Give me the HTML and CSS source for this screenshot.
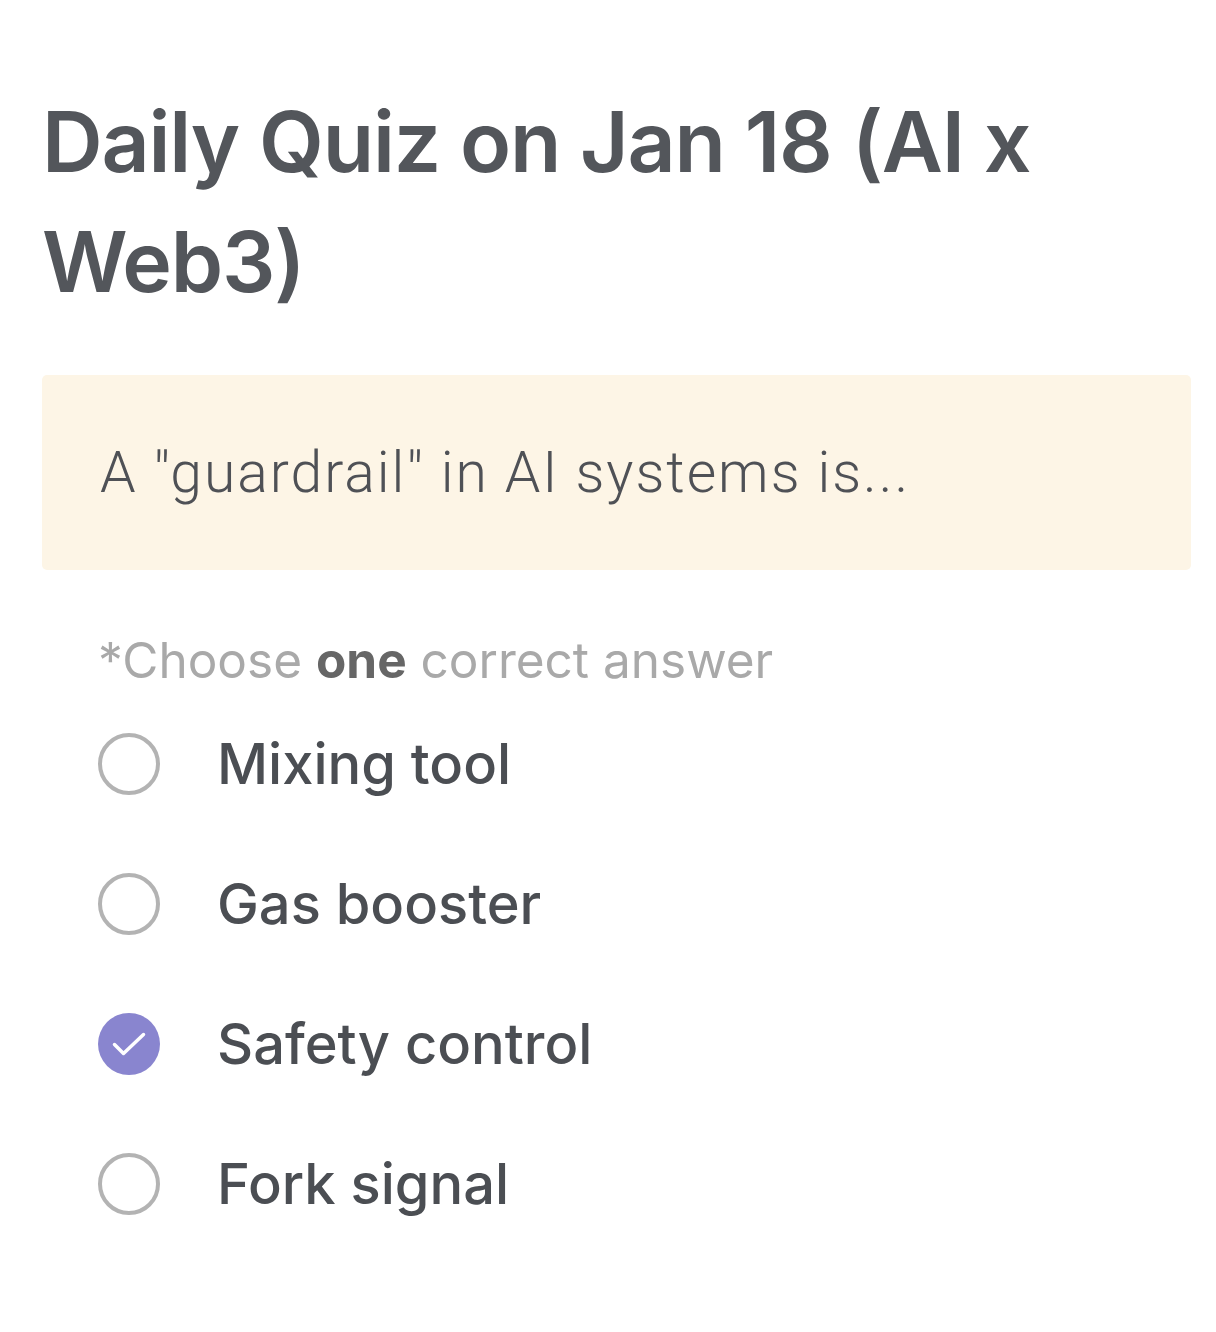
FILE: index.html
```html
<!DOCTYPE html>
<html>
<head>
<meta charset="utf-8">
<link rel="stylesheet" href="styles.css">
</head>
<body>
<main class="quiz">
  <h1 class="title">Daily Quiz on Jan 18 (AI x Web3)</h1>
  <div class="question">A "guardrail" in AI systems is...</div>
  <p class="hint">*Choose <b>one</b> correct answer</p>
  <ul class="options">
    <li class="option"><span class="radio"></span><span class="label">Mixing tool</span></li>
    <li class="option"><span class="radio"></span><span class="label">Gas booster</span></li>
    <li class="option"><span class="radio checked"><svg viewBox="0 0 62 62" width="62" height="62"><path d="M16.5 31.5 L25.5 40.5 L45.5 21.5" fill="none" stroke="#fff" stroke-width="3.5" stroke-linecap="round" stroke-linejoin="round"/></svg></span><span class="label">Safety control</span></li>
    <li class="option"><span class="radio"></span><span class="label">Fork signal</span></li>
  </ul>
</main>
</body>
</html>
```

FILE: styles.css
```css
html, body {
  margin: 0;
  padding: 0;
  background: #ffffff;
}
.quiz {
  padding: 82px 25px 0 42px;
  font-family: "Inter", "Liberation Sans", sans-serif;
}
.title {
  margin: 0;
  font-size: 84px;
  font-weight: 600;
  line-height: 120px;
  letter-spacing: -1.2px;
  color: #53565b;
  padding-right: 120px;
}
.question {
  margin-top: 53px;
  background: #fdf5e6;
  border-radius: 5px;
  height: 195px;
  box-sizing: border-box;
  padding: 0 58px;
  display: flex;
  align-items: center;
  font-family: "Roboto", sans-serif;
  font-weight: 300;
  font-size: 57px;
  letter-spacing: 2px;
  color: #4f5156;
}
.hint {
  margin: 60px 0 0 56px;
  font-size: 49.5px;
  color: #a9a9a9;
  line-height: 60px;
}
.hint b {
  color: #666;
  font-weight: 700;
}
.options {
  list-style: none;
  margin: 4px 0 0 56px;
  padding: 0;
}
.option {
  display: flex;
  align-items: center;
  height: 140px;
  gap: 57px;
}
.radio {
  width: 62px;
  height: 62px;
  box-sizing: border-box;
  border: 4px solid #b3b3b3;
  border-radius: 50%;
  flex: none;
  display: flex;
  align-items: center;
  justify-content: center;
}
.radio.checked {
  border: none;
  background: #8985cf;
}
.label {
  font-size: 56px;
  font-weight: 500;
  color: #4b4e53;
}
```
